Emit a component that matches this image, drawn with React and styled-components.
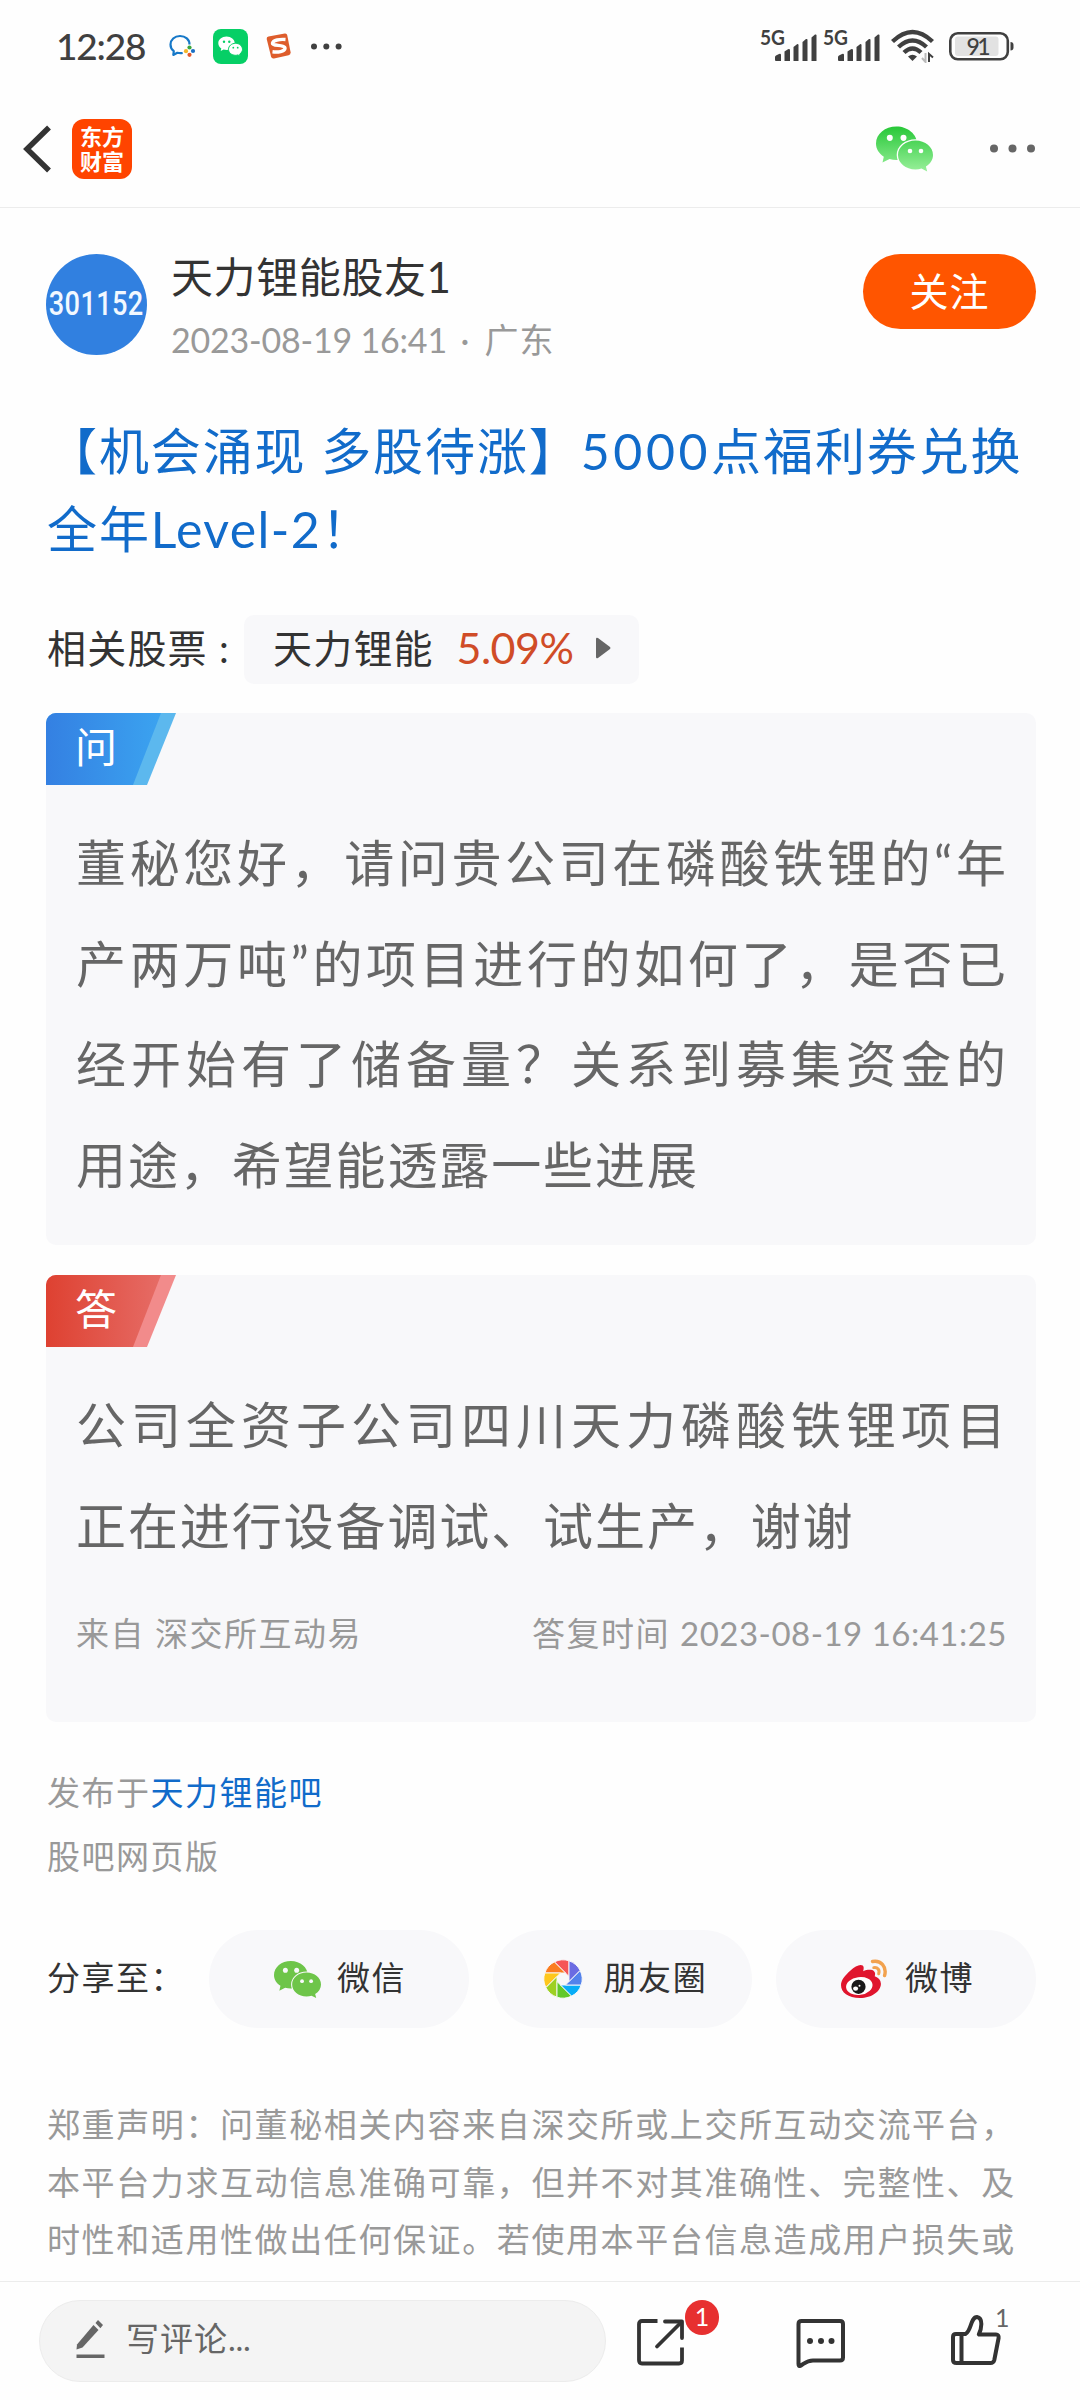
import React from "react";
import styled, { createGlobalStyle } from "styled-components";

const GlobalStyle = createGlobalStyle`
  * { box-sizing: border-box; }
  body {
    margin: 0;
    background: #fefefe;
    font-family: Lato, "Noto Sans CJK SC", sans-serif;
    color: #333;
  }
  svg { display: block; flex: none; }
`;

const Screen = styled.div`
  width: 1080px;
  height: 2400px;
  display: flex;
  flex-direction: column;
  overflow: hidden;
  background: #fefefe;
`;

/* ---------- status bar ---------- */

const StatusBar = styled.header`
  flex: none;
  height: 92px;
  padding: 0 65px 0 56px;
  display: flex;
  justify-content: space-between;
`;

const StatusGroup = styled.div`
  display: flex;
  align-items: center;
  height: 92px;
`;

const Clock = styled.span`
  width: 90px;
  margin-right: 22px;
  font-size: 37px;
  font-weight: 500;
  line-height: 40px;
  letter-spacing: -1.2px;
  color: #404040;
  white-space: nowrap;
`;

const StatusIcon = styled.div`
  margin-left: ${(p) => p.$gap}px;
`;

/* ---------- nav bar ---------- */

const NavBar = styled.nav`
  flex: none;
  height: 116px;
  padding: 0 45px 2px 22px;
  border-bottom: 1px solid #ececec;
  display: flex;
  align-items: center;
  justify-content: space-between;
`;

const NavGroup = styled.div`
  display: flex;
  align-items: center;
  gap: ${(p) => p.$gap}px;
`;

const BrandLogo = styled.div`
  width: 60px;
  height: 60px;
  border-radius: 12px;
  background: #ff4400;
  color: #fff;
  display: flex;
  align-items: center;
  justify-content: center;
  text-align: center;
  font-size: 22px;
  font-weight: 700;
  line-height: 25px;
`;

/* ---------- post ---------- */

const Content = styled.main`
  flex: 1;
  min-height: 0;
  overflow: hidden;
  padding: 46px 44px 0 46px;
`;

const AuthorRow = styled.section`
  display: flex;
  height: 101px;
`;

const Avatar = styled.div`
  width: 101px;
  height: 101px;
  padding-bottom: 3px;
  border-radius: 50%;
  background: #3180e0;
  color: #f2f8ff;
  display: flex;
  align-items: center;
  justify-content: center;
`;

const AvatarCode = styled.span`
  font-family: Roboto, sans-serif;
  font-size: 34px;
  font-weight: 500;
  line-height: 40px;
  letter-spacing: 0.4px;
  transform: scaleX(0.8);
`;

const AuthorInfo = styled.div`
  flex: 1;
  margin-left: 24px;
`;

const AuthorName = styled.div`
  font-size: 42px;
  line-height: 46px;
  letter-spacing: 0.6px;
  color: #333;
`;

const PostDate = styled.div`
  margin-top: 16px;
  font-size: 34px;
  line-height: 48px;
  letter-spacing: -0.2px;
  color: #999;
  white-space: pre;
`;

const Place = styled.span`
  letter-spacing: 1px;
`;

const Separator = styled.span`
  margin: 0 7px 0 5px;
`;

const FollowButton = styled.button`
  width: 173px;
  height: 75px;
  padding: 0;
  border: 0;
  border-radius: 38px;
  background: #ff5500;
  color: #fff;
  font-family: inherit;
  font-size: 39px;
  line-height: 75px;
  letter-spacing: 1px;
`;

const Title = styled.h1`
  margin: 57px 0 0;
  padding-left: 1px;
  font-size: 50px;
  font-weight: 400;
  line-height: 78px;
  letter-spacing: 1.9px;
  color: #116bca;
  white-space: nowrap;
`;

const Digits = styled.span`
  letter-spacing: ${(p) => p.$spacing}px;
`;

const StockRow = styled.section`
  margin-top: 47px;
  display: flex;
  align-items: center;
  height: 69px;
`;

const StockLabel = styled.span`
  width: 198px;
  padding: 0 0 3px 1px;
  font-size: 39px;
  line-height: 66px;
  letter-spacing: 1.2px;
  white-space: pre;
`;

const StockChip = styled.div`
  width: 395px;
  height: 69px;
  padding: 0 27px 3px 29px;
  border-radius: 10px;
  background: #f8f8fa;
  display: flex;
  align-items: center;
  justify-content: space-between;
  font-size: 39px;
  line-height: 66px;
  letter-spacing: 1.2px;
`;

const StockChange = styled.span`
  font-size: 43px;
  letter-spacing: -0.5px;
  color: #d04c27;
`;

/* ---------- Q & A cards ---------- */

const Card = styled.section`
  width: 990px;
  height: ${(p) => p.$height}px;
  margin-top: ${(p) => p.$top}px;
  border-radius: 10px;
  background: #f8f8fa;
  overflow: hidden;
`;

const TagEdge = styled.div`
  width: 130px;
  height: 72px;
  background: ${(p) => p.$edge};
  clip-path: polygon(0 0, 100% 0, 101px 100%, 0 100%);
`;

const TagFace = styled.div`
  width: 115px;
  height: 72px;
  padding-left: 29px;
  background: linear-gradient(90deg, ${(p) => p.$from}, ${(p) => p.$to});
  clip-path: polygon(0 0, 100% 0, 87px 100%, 0 100%);
  color: #fff;
  font-size: 42px;
  line-height: 68px;
`;

const CardText = styled.div`
  margin: ${(p) => p.$top}px 30px 0;
  font-size: 50px;
  line-height: 101px;
  color: #666;
`;

const TextLine = styled.div`
  height: 100.7px;
  white-space: nowrap;
  letter-spacing: ${(p) => (p.$last ? 1.9 : 0)}px;
  text-align-last: ${(p) => (p.$last ? "left" : "justify")};
`;

const CardMeta = styled.div`
  margin: 32px 29px 0 30px;
  display: flex;
  justify-content: space-between;
  font-size: 33px;
  line-height: 50px;
  letter-spacing: 1.5px;
  color: #999;
`;

/* ---------- source, share, disclaimer ---------- */

const Source = styled.section`
  margin-top: 38px;
  padding-left: 1px;
  font-size: 33px;
  line-height: 64px;
  letter-spacing: 1.5px;
  color: #999;
`;

const SourceLink = styled.span`
  color: #116bca;
`;

const ShareRow = styled.section`
  margin-top: 42px;
  display: flex;
  align-items: center;
  height: 98px;
  gap: 24px;
`;

const ShareLabel = styled.span`
  width: 139px;
  padding: 0 0 3px 1px;
  font-size: 33px;
  line-height: 95px;
  letter-spacing: 1.5px;
  white-space: nowrap;
`;

const SharePill = styled.div`
  flex: none;
  width: 259.5px;
  height: 98px;
  border-radius: 49px;
  background: #f8f8fa;
  display: flex;
  align-items: center;
  padding-left: ${(p) => p.$pad}px;
  gap: ${(p) => p.$gap}px;
`;

const ShareName = styled.span`
  padding-bottom: 3px;
  font-size: 33px;
  line-height: 95px;
  letter-spacing: 1.6px;
`;

const Disclaimer = styled.p`
  margin: 68px 0 0;
  padding-left: 1px;
  font-size: 33px;
  line-height: 57.6px;
  letter-spacing: 1.6px;
  color: #999;
  white-space: nowrap;
`;

/* ---------- bottom bar ---------- */

const BottomBar = styled.footer`
  flex: none;
  height: 119px;
  padding: 18px 0 0 39px;
  border-top: 1px solid #ececec;
  display: flex;
`;

const CommentInput = styled.div`
  width: 567px;
  height: 82px;
  padding: 0 0 4px 36px;
  border: 1px solid #ececec;
  border-radius: 41px;
  background: #f4f4f4;
  display: flex;
  align-items: center;
  gap: 20px;
`;

const Placeholder = styled.span`
  padding-bottom: 3px;
  font-size: 33px;
  line-height: 60px;
  letter-spacing: 1px;
  color: #666;
`;

const Action = styled.div`
  position: relative;
  margin-left: ${(p) => p.$left}px;
  padding-top: ${(p) => p.$top}px;
`;

const Badge = styled.span`
  position: absolute;
  left: 48px;
  top: 0;
  width: 34px;
  height: 35px;
  border-radius: 17px;
  background: #e73030;
  color: #fff;
  font-size: 25px;
  line-height: 33px;
  text-align: center;
`;

const LikeCount = styled.span`
  position: absolute;
  left: 44px;
  top: 3px;
  font-size: 25px;
  line-height: 28px;
  color: #666;
`;

/* ---------- drawings ---------- */

const WeChatMark = ({ width, height, top, bottom, gap, id }) => (
  <svg width={width} height={height} viewBox="0 0 57 46">
    <defs>
      <linearGradient id={id} x1="0" y1="0" x2="0" y2="46" gradientUnits="userSpaceOnUse">
        <stop offset="0" stopColor={top} />
        <stop offset="1" stopColor={bottom} />
      </linearGradient>
    </defs>
    <path
      d="M20.5 .5C9 .5 0 8 0 17.5c0 5.5 3 10 7.8 13.2L6.5 36.5l7-3.4c2.2.6 4.500.9 7 .9C32 34 41 26.500 41 17.500S32 .5 20.500 .5z"
      fill={`url(#${id})`}
    />
    <path
      d="M39.500 14.500c-9.800 0-17.500 6.500-17.500 14.500s7.700 14.500 17.500 14.500c2.200 0 4.200-.3 6-.9l5.700 2.900-1.300-4.900C54.300 38 57 33.800 57 29c0-8-7.700-14.500-17.500-14.500z"
      fill={`url(#${id})`}
      stroke={gap}
      strokeWidth="2.600"
      paintOrder="stroke"
    />
    <ellipse cx="13.800" cy="11.800" rx="3" ry="3.100" fill={gap} />
    <ellipse cx="27.500" cy="11.800" rx="3" ry="3.100" fill={gap} />
    <circle cx="34" cy="25" r="2.300" fill={gap} />
    <circle cx="45" cy="25" r="2.300" fill={gap} />
  </svg>
);

const WeComIcon = () => (
  <svg width="27" height="24" viewBox="0 0 27 24">
    <path
      d="M20.500 10.500C20.500 5.500 16.500 2 11 2S1.500 5.700 1.500 10.500c0 3 1.300 5.200 3.300 6.700L4.300 21l4-2.200c1.700.4 3.600.5 5.400.2"
      fill="none"
      stroke="#1678c8"
      strokeWidth="2.200"
      strokeLinejoin="round"
    />
    <circle cx="20.500" cy="13.500" r="2.100" fill="#3aa63f" />
    <circle cx="24" cy="17" r="2.100" fill="#1a6fc4" />
    <circle cx="20.500" cy="20.800" r="2.100" fill="#e2582c" />
    <circle cx="17" cy="17.200" r="2.100" fill="#f4b62a" />
  </svg>
);

const WeChatAppIcon = () => (
  <svg width="35" height="35" viewBox="0 0 35 35">
    <rect width="35" height="35" rx="8" fill="#06cf66" />
    <path d="M13.500 7.500c-4.600 0-8.200 3-8.200 6.700 0 2.200 1.200 4 3 5.200l-.6 2.500 2.900-1.400c1 .3 1.900.4 2.900.4 4.600 0 8.200-3 8.200-6.700s-3.600-6.700-8.200-6.700z" fill="#fff" />
    <path d="M22.500 14.300c-3.900 0-7 2.700-7 6s3.100 6 7 6c.9 0 1.700-.1 2.400-.4l2.300 1.200-.5-2c1.700-1.100 2.800-2.900 2.800-4.800 0-3.300-3.100-6-7-6z" fill="#fff" stroke="#06cf66" strokeWidth="1" />
    <g fill="#06cf66">
      <circle cx="11" cy="12.800" r="1.200" />
      <circle cx="16.300" cy="12.800" r="1.200" />
      <circle cx="20.300" cy="18.700" r="0.900" />
      <circle cx="24.700" cy="18.700" r="0.900" />
    </g>
  </svg>
);

const SogouIcon = () => (
  <svg width="25" height="26" viewBox="0 0 25 26">
    <path d="M2.500 3.600 18.800.6q2-.3 2.400 1.500l3.400 17.200q.2 2.300-2 3L8 25.500q-2.300.4-2.900-1.700L.7 6q-.3-2 1.800-2.400z" fill="#de5d2c" />
    <path
      d="M19.500 6.500C14 6 7 7 6.500 10.300c-.3 3 13 1.200 12.500 5.200-.4 3-7 4-12.500 3.300"
      fill="none"
      stroke="#fff"
      strokeWidth="3.400"
    />
  </svg>
);

const Dots = ({ width, r, step, fill }) => (
  <svg width={width} height={r * 2 + 1} viewBox={`0 0 ${width} ${r * 2 + 1}`}>
    {[0, 1, 2].map((i) => (
      <circle key={i} cx={r + i * step} cy={r + 0.5} r={r} fill={fill} />
    ))}
  </svg>
);

const SignalIcon = () => (
  <svg width="60" height="54" viewBox="-1 -10 60 54">
    <text x="0" y="15.500" fontSize="20" fontWeight="700" fill="#404040" fontFamily="Lato" textLength="25" lengthAdjust="spacingAndGlyphs">
      5G
    </text>
    <g fill="#404040">
      <path d="M15 31v-3q0-1 1-1.500l3-1.500q2-.6 2 1v6h-5q-1 0-1-1z" />
      <path d="M24.500 32V22.500l3.500-2.300q2-.5 2 1V32z" />
      <path d="M33.500 32V18l3.500-2.800q1.500-.5 1.500 1V32z" />
      <path d="M42.500 32V13l3.500-3q1.500-.5 1.500 1V32z" />
      <path d="M51.500 32V8.500l3.500-3q1.500-.5 1.500 1V32z" />
    </g>
  </svg>
);

const WifiIcon = () => (
  <svg width="43" height="34" viewBox="0 0 43 34">
    <g fill="none" stroke="#404040" strokeWidth="4.400">
      <path d="M1.500 12.500Q21.500-6.500 41.500 12.500" />
      <path d="M7.500 18Q21.500 5 35.500 18" />
      <path d="M13 23.500Q21.500 15.500 30 23.500" />
    </g>
    <path d="M17 27.500q4.500-3.500 9 0l-4.500 4.500z" fill="#404040" />
    <path d="M34.500 24v9l-3.500-4" fill="none" stroke="#bbb" strokeWidth="2" />
    <path d="M38 33v-8l4 3.500" fill="none" stroke="#404040" strokeWidth="2" />
  </svg>
);

const BatteryIcon = () => (
  <svg width="66" height="30" viewBox="0 0 66 30">
    <rect x="1.300" y="2.300" width="57.500" height="26" rx="7.500" fill="none" stroke="#404040" strokeWidth="2.600" />
    <rect x="6" y="5.500" width="43.500" height="19.500" rx="3" fill="#e2e2e2" />
    <path d="M61.500 11q3 0 3 3v2.500q0 3-3 3z" fill="#404040" />
    <text x="29.500" y="23.500" textAnchor="middle" fontSize="23" fontWeight="500" fill="#404040" fontFamily="Lato" textLength="24">
      91
    </text>
  </svg>
);

const BackIcon = () => (
  <svg width="30" height="48" viewBox="0 0 30 48">
    <path d="M27 2.500 5 24l22 21.500" fill="none" stroke="#333" strokeWidth="5.500" />
  </svg>
);

const bladeColors = ["#f65557", "#fb7d20", "#fec71c", "#9dd022", "#62c92a", "#08adf7", "#5382ec", "#6b6be2"];

const MomentsIcon = () => (
  <svg width="40" height="40" viewBox="-20 -20 40 40">
    {bladeColors.map((color, i) => (
      <path
        key={color}
        d="M6-2.500V-18.200A19.200 19.200 0 0 0-8.600-17.100Z"
        fill={color}
        stroke="#f8f8fa"
        strokeWidth="0.900"
        transform={`rotate(${-45 * i})`}
      />
    ))}
  </svg>
);

const WeiboIcon = () => (
  <svg width="47" height="40" viewBox="0 0 47 40">
    <path
      d="M9.500 11.500C14 7 19.500 4.600 21.700 6.600c1.300 1.100 1.200 3.200.5 5.600 4-1.600 8.800-2 11 .2 1.200 1.300 1.100 3 .5 4.800 3.800 1.200 6 3.800 6.200 7.300C40.200 32 31 39 19 39S0 33.500 0 26c0-4.800 4-9.500 9.500-14.500z"
      fill="#e0152d"
    />
    <ellipse cx="18.300" cy="27" rx="13.300" ry="8.900" fill="#fff" transform="rotate(-8 18.300 27)" />
    <circle cx="17.500" cy="27.800" r="7.100" fill="#1a1a1a" />
    <ellipse cx="14.600" cy="29.600" rx="2.500" ry="2.200" fill="#fff" />
    <circle cx="18.500" cy="26.800" r="1" fill="#fff" />
    <path d="M31.500 2.500C40 .8 46 8 43.600 16.500" fill="none" stroke="#f2a24e" strokeWidth="3.400" strokeLinecap="round" />
    <path d="M32.800 8.600c3.700-.7 6.200 2.400 4.900 6.200" fill="none" stroke="#f2a24e" strokeWidth="3" strokeLinecap="round" />
  </svg>
);

const PlayIcon = () => (
  <svg width="16" height="22" viewBox="0 0 16 22">
    <path d="M0 2q0-2 2-1l12 9q1 1 0 2L2 21q-2 1-2-1z" fill="#666" />
  </svg>
);

const PencilIcon = () => (
  <svg width="30" height="40" viewBox="0 0 30 40">
    <g fill="#666">
      <path d="M1 25.500 17.500 6l5 5L6.500 28.500.5 30.500z" />
      <path d="M19.500 4 22 1l5 5-2.600 3.300z" />
      <rect x="0.500" y="35.500" width="28" height="3.500" />
    </g>
  </svg>
);

const ShareIcon = () => (
  <svg width="48" height="48" viewBox="0 0 48 48">
    <g fill="none" stroke="#333" strokeWidth="3.800">
      <path d="M20.500 3H5Q2 3 2 6v36q0 3.500 3 3.500h37q3 0 3-3V29.500" />
      <path d="M28 3.500h17V20" strokeLinecap="round" strokeLinejoin="round" />
      <path d="M44 4.500 20 28.500" strokeLinecap="round" />
    </g>
  </svg>
);

const CommentIcon = () => (
  <svg width="50" height="50" viewBox="0 0 50 50">
    <path
      d="M5.500 3H44q3 0 3 3v33.500q0 3-3 3H17c-6 0-8 2.500-12 5-2 1.200-2.500.3-2.500-1.500V6q0-3 3-3z"
      fill="none"
      stroke="#333"
      strokeWidth="4"
    />
    <g fill="#333">
      <circle cx="14" cy="23" r="3" />
      <circle cx="25" cy="23" r="3" />
      <circle cx="35.500" cy="23" r="3" />
    </g>
  </svg>
);

const ThumbIcon = () => (
  <svg width="50" height="52" viewBox="0 0 50 52">
    <path
      d="M5 20h9.500c6-3 5-17 11.500-17 6.500 1 4.500 12 1.800 17.500H45q3 0 2.600 3.500l-4.300 22q-.8 3-3.800 3H5.500Q2 49 2 46V23q0-3 3-3zM10.500 20v29"
      fill="none"
      stroke="#333"
      strokeWidth="4"
      strokeLinejoin="round"
    />
  </svg>
);

/* ---------- page ---------- */

const question = [
  "董秘您好，请问贵公司在磷酸铁锂的“年",
  "产两万吨”的项目进行的如何了，是否已",
  "经开始有了储备量？关系到募集资金的",
  "用途，希望能透露一些进展",
];

const answer = ["公司全资子公司四川天力磷酸铁锂项目", "正在进行设备调试、试生产，谢谢"];

const Lines = ({ lines }) =>
  lines.map((line, i) => (
    <TextLine key={line} $last={i === lines.length - 1}>
      {line}
    </TextLine>
  ));

export default function App() {
  return (
    <Screen>
      <GlobalStyle />
      <StatusBar>
        <StatusGroup>
          <Clock>12:28</Clock>
          <StatusIcon $gap={1}><WeComIcon /></StatusIcon>
          <StatusIcon $gap={17}><WeChatAppIcon /></StatusIcon>
          <StatusIcon $gap={18}><SogouIcon /></StatusIcon>
          <StatusIcon $gap={20}><Dots width={31} r={3} step={12.3} fill="#404040" /></StatusIcon>
        </StatusGroup>
        <StatusGroup>
          <StatusIcon $gap={0}><SignalIcon /></StatusIcon>
          <StatusIcon $gap={3}><SignalIcon /></StatusIcon>
          <StatusIcon $gap={9}><WifiIcon /></StatusIcon>
          <StatusIcon $gap={15}><BatteryIcon /></StatusIcon>
        </StatusGroup>
      </StatusBar>

      <NavBar>
        <NavGroup $gap={20}>
          <BackIcon />
          <BrandLogo>东方<br />财富</BrandLogo>
        </NavGroup>
        <NavGroup $gap={57}>
          <WeChatMark id="navMark" width={57} height={46} top="#26c737" bottom="#9af09b" gap="#fefefe" />
          <Dots width={45} r={4} step={18.500} fill="#666" />
        </NavGroup>
      </NavBar>

      <Content>
        <AuthorRow>
          <Avatar><AvatarCode>301152</AvatarCode></Avatar>
          <AuthorInfo>
            <AuthorName>天力锂能股友1</AuthorName>
            <PostDate>2023-08-19 16:41 <Separator>·</Separator> <Place>广东</Place></PostDate>
          </AuthorInfo>
          <FollowButton>关注</FollowButton>
        </AuthorRow>

        <Title>
          【机会涌现 多股待涨】<Digits $spacing={3.6}>5000</Digits>点福利券兑换
          <br />
          全年<Digits $spacing={1.4}>Level-2</Digits>！
        </Title>

        <StockRow>
          <StockLabel>相关股票 :</StockLabel>
          <StockChip>
            <span>天力锂能</span>
            <StockChange>5.09%</StockChange>
            <PlayIcon />
          </StockChip>
        </StockRow>

        <Card $height={532} $top={29}>
          <TagEdge $edge="#5cb8ee"><TagFace $from="#3480e2" $to="#3ba3f0">问</TagFace></TagEdge>
          <CardText $top={28}><Lines lines={question} /></CardText>
        </Card>

        <Card $height={447} $top={30}>
          <TagEdge $edge="#f28b8b"><TagFace $from="#de4131" $to="#e66c66">答</TagFace></TagEdge>
          <CardText $top={28}><Lines lines={answer} /></CardText>
          <CardMeta>
            <span>来自 深交所互动易</span>
            <span>答复时间 <Digits $spacing={0.5}>2023-08-19 16:41:25</Digits></span>
          </CardMeta>
        </Card>

        <Source>
          <div>发布于<SourceLink>天力锂能吧</SourceLink></div>
          <div>股吧网页版</div>
        </Source>

        <ShareRow>
          <ShareLabel>分享至：</ShareLabel>
          <SharePill $pad={65} $gap={16}>
            <WeChatMark id="shareMark" width={47} height={39} top="#6ec549" bottom="#6ec549" gap="#f8f8fa" />
            <ShareName>微信</ShareName>
          </SharePill>
          <SharePill $pad={50} $gap={21}>
            <MomentsIcon />
            <ShareName>朋友圈</ShareName>
          </SharePill>
          <SharePill $pad={65} $gap={17}>
            <WeiboIcon />
            <ShareName>微博</ShareName>
          </SharePill>
        </ShareRow>

        <Disclaimer>
          郑重声明：问董秘相关内容来自深交所或上交所互动交流平台，
          <br />
          本平台力求互动信息准确可靠，但并不对其准确性、完整性、及
          <br />
          时性和适用性做出任何保证。若使用本平台信息造成用户损失或
        </Disclaimer>
      </Content>

      <BottomBar>
        <CommentInput>
          <PencilIcon />
          <Placeholder>写评论<Digits $spacing={-0.3}>...</Digits></Placeholder>
        </CommentInput>
        <Action $left={31} $top={18}>
          <ShareIcon />
          <Badge>1</Badge>
        </Action>
        <Action $left={111} $top={18}>
          <CommentIcon />
        </Action>
        <Action $left={105} $top={14}>
          <ThumbIcon />
          <LikeCount>1</LikeCount>
        </Action>
      </BottomBar>
    </Screen>
  );
}
